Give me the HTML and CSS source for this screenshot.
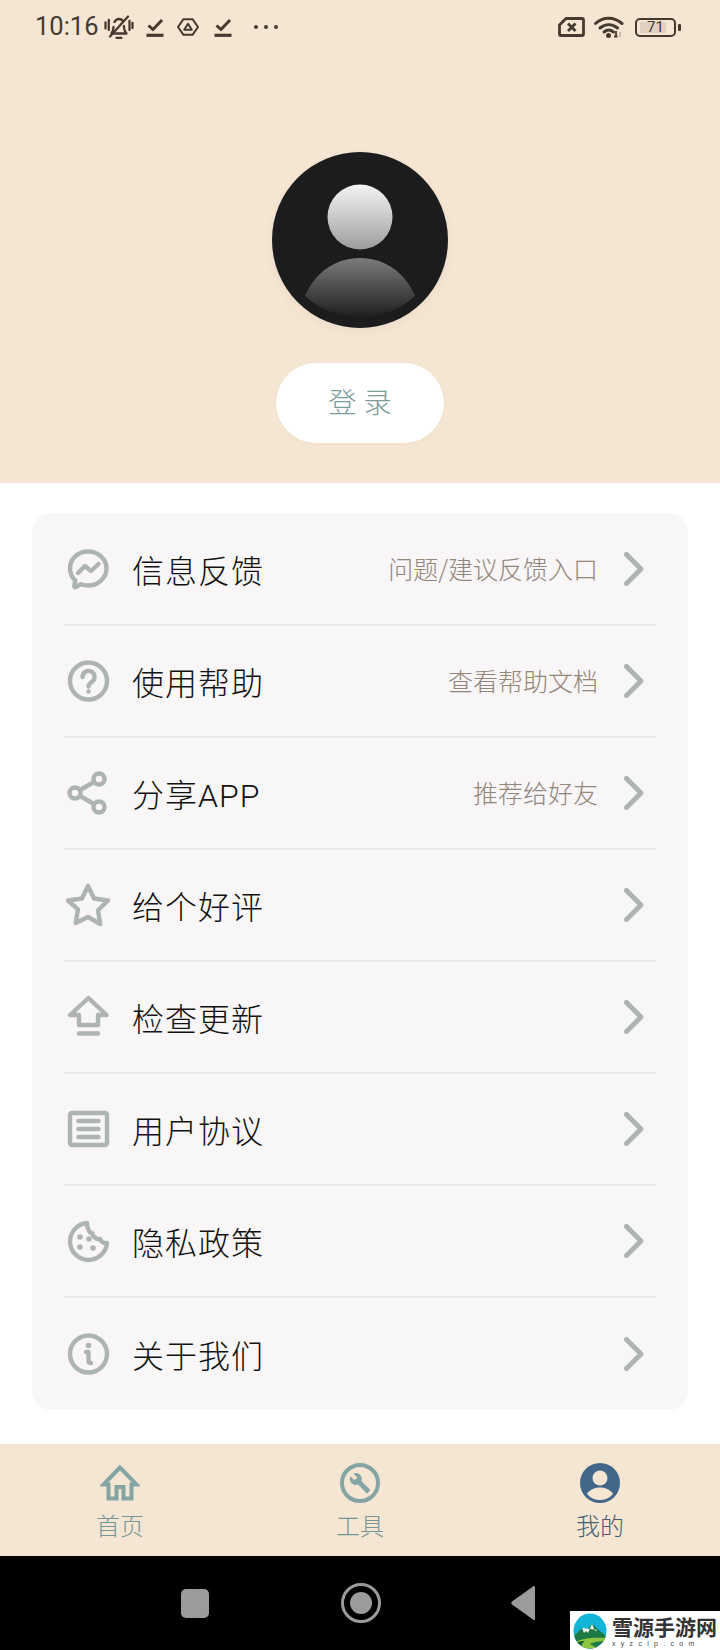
FILE: index.html
```html
<!DOCTYPE html>
<html lang="zh-CN">
<head>
<meta charset="utf-8">
<title>我的</title>
<link rel="stylesheet" href="styles.css">
</head>
<body>
<div class="page">
  <header class="header">
    <div class="status">
      <div class="status-left">
        <span class="time">10:16</span>
        <svg class="st-bell" viewBox="0 0 30 24"><g fill="none" stroke="currentColor" stroke-width="2.300" stroke-linecap="round" stroke-linejoin="round"><path d="M7.500 18.500h15c-1.500-1.500-2.500-3-2.500-6V11M9.500 12c0 3-1 5-2 6.500M10.500 7c1-1.800 2.800-3 4.500-3 1.700 0 3.300.8 4 2.300"/><path d="M6 21.500 24 1.500"/><path d="M1.500 7.500v6M4.800 5v10M25.500 6v9M28.500 8v5"/><path d="M12.500 22.800h5"/></g></svg>
        <svg class="st-check" viewBox="0 0 18 20"><g fill="none" stroke="currentColor"><path d="M2.500 8.500l4.500 4 9-9.500" stroke-width="3"/><path d="M.5 18.300h17" stroke-width="3.200"/></g></svg>
        <svg class="st-tri" viewBox="0 0 22 18"><g fill="none" stroke="currentColor" stroke-linejoin="round"><path d="M6.500 1.200h9L21 9l-5.500 7.800h-9L1 9z" stroke-width="2"/><path d="M11 5.800l3.800 6h-7.600z" stroke-width="2"/></g></svg>
        <svg class="st-check st-check-b" viewBox="0 0 18 20"><g fill="none" stroke="currentColor"><path d="M2.500 8.500l4.500 4 9-9.500" stroke-width="3"/><path d="M.5 18.300h17" stroke-width="3.200"/></g></svg>
        <svg class="st-dots" viewBox="0 0 24 4"><g fill="currentColor"><circle cx="2" cy="2" r="2"/><circle cx="12" cy="2" r="2"/><circle cx="22" cy="2" r="2"/></g></svg>
      </div>
      <div class="status-right">
        <svg class="st-sim" viewBox="0 0 27 20"><path d="M8 1.500h16a1.500 1.500 0 0 1 1.500 1.500v14a1.500 1.500 0 0 1-1.500 1.500H3A1.500 1.500 0 0 1 1.500 17V8z" fill="none" stroke="currentColor" stroke-width="2.800" stroke-linejoin="round"/><path d="M10 6.500l7.500 7.500M17.500 6.500 10 14" fill="none" stroke="currentColor" stroke-width="2.800"/></svg>
        <svg class="st-wifi" viewBox="0 0 30 22"><g fill="none" stroke="currentColor" stroke-width="3" stroke-linecap="round"><path d="M1.500 7.500C9 .5 20 .5 28 7.500"/><path d="M6 12c5.500-4.500 12-4.500 17.500 0"/><path d="M10 16c3-2.500 6.500-2.500 9.500 0"/></g><circle cx="14.500" cy="19.500" r="2.500" fill="currentColor"/><path d="M22 15v6M20 20.500h3.500" stroke="currentColor" stroke-width="1.800"/><path d="M26 16v5" stroke="#b9ad9f" stroke-width="1.500"/></svg>
        <div class="battery">
          <div class="battery-body"><span class="battery-level">71</span></div>
          <span class="battery-nub"></span>
        </div>
      </div>
    </div>
    <div class="avatar">
      <svg viewBox="0 0 176 176" width="176" height="176">
        <defs>
          <linearGradient id="headGrad" x1="0" y1="0" x2="0" y2="1"><stop offset="0" stop-color="#f4f4f4"/><stop offset="1" stop-color="#9d9d9d"/></linearGradient>
          <linearGradient id="bodyGrad" x1="0" y1="0" x2="0" y2="1"><stop offset="0" stop-color="#7b7b7b"/><stop offset="1" stop-color="#1f1f21"/></linearGradient>
        </defs>
        <circle cx="88" cy="88" r="88" fill="#1c1c1e"/>
        <circle cx="88" cy="65" r="32.500" fill="url(#headGrad)"/>
        <path d="M33 144C43 120 64 106 88 106s45 14 55 38c-14 13-34 21-55 21s-41-8-55-21z" fill="url(#bodyGrad)"/>
      </svg>
    </div>
    <button class="login">登 录</button>
  </header>

  <main class="main">
    <section class="card">
      <div class="row">
        <span class="row-icon"><svg viewBox="0 0 44 44"><path d="M22 4.500C12 4.500 4 12 4 21.500c0 4.800 2 9 5.300 12l-1 5.500c-.2 1 .6 1.500 1.400 1l5.300-2.800c2.200.8 4.500 1.300 7 1.300 10 0 18.500-7.500 18.500-17S32 4.500 22 4.500z"/><path d="M12 26l7-7 6 5 7.500-7"/></svg></span>
        <span class="row-title">信息反馈</span>
        <span class="row-sub">问题/建议反馈入口</span>
        <svg class="chev" viewBox="0 0 20 34"><path d="M2.500 2.500 17 17 2.500 31.500"/></svg>
      </div>
      <div class="row">
        <span class="row-icon"><svg viewBox="0 0 44 44"><circle cx="22.500" cy="22" r="18.500"/><path d="M16.500 18a6 6 0 1 1 9.500 4.800c-2 1.500-3.500 2.500-3.500 4.700"/><circle class="solid" cx="22.500" cy="32.500" r="2.200"/></svg></span>
        <span class="row-title">使用帮助</span>
        <span class="row-sub">查看帮助文档</span>
        <svg class="chev" viewBox="0 0 20 34"><path d="M2.500 2.500 17 17 2.500 31.500"/></svg>
      </div>
      <div class="row">
        <span class="row-icon"><svg viewBox="0 0 44 44"><circle cx="33" cy="8" r="5.500"/><circle cx="9" cy="22" r="5.500"/><circle cx="33" cy="36" r="5.500"/><path d="M14 19 28 11M14 25l14 8"/></svg></span>
        <span class="row-title">分享APP</span>
        <span class="row-sub">推荐给好友</span>
        <svg class="chev" viewBox="0 0 20 34"><path d="M2.500 2.500 17 17 2.500 31.500"/></svg>
      </div>
      <div class="row">
        <span class="row-icon"><svg viewBox="0 0 44 44"><path d="M22 3l6 12.500 14 2-10 9.800 2.300 13.700L22 34l-12.300 6L12 26.300 2 17.500l14-2z"/></svg></span>
        <span class="row-title">给个好评</span>
        <svg class="chev" viewBox="0 0 20 34"><path d="M2.500 2.500 17 17 2.500 31.500"/></svg>
      </div>
      <div class="row">
        <span class="row-icon"><svg viewBox="0 0 44 44"><path d="M22.500 3 4 20h9v10h19V20h8.500z"/><path class="thick" d="M13 38.500h19"/></svg></span>
        <span class="row-title">检查更新</span>
        <svg class="chev" viewBox="0 0 20 34"><path d="M2.500 2.500 17 17 2.500 31.500"/></svg>
      </div>
      <div class="row">
        <span class="row-icon"><svg viewBox="0 0 44 44"><rect x="4" y="6" width="37" height="32" rx="2"/><path class="thick" d="M12.500 14h20M12.500 22h20M12.500 30h20"/></svg></span>
        <span class="row-title">用户协议</span>
        <svg class="chev" viewBox="0 0 20 34"><path d="M2.500 2.500 17 17 2.500 31.500"/></svg>
      </div>
      <div class="row">
        <span class="row-icon"><svg viewBox="0 0 44 44"><path d="M21 4A18.500 18.500 0 1 0 41 24c-3 .5-6-1-7-4-3.500.5-7-1.500-7.500-5.500C23 14 21 8 21 4z"/><circle class="solid" cx="14" cy="18" r="2.800"/><circle class="solid" cx="23" cy="20" r="2.800"/><circle class="solid" cx="14" cy="28" r="2.800"/><circle class="solid" cx="27" cy="29" r="2.800"/></svg></span>
        <span class="row-title">隐私政策</span>
        <svg class="chev" viewBox="0 0 20 34"><path d="M2.500 2.500 17 17 2.500 31.500"/></svg>
      </div>
      <div class="row">
        <span class="row-icon"><svg viewBox="0 0 44 44"><circle cx="22.500" cy="22" r="18.500"/><circle class="solid" cx="22.500" cy="13.500" r="2.800"/><path d="M20 20h2.500v9c0 1.500 1 2 2.500 2"/></svg></span>
        <span class="row-title">关于我们</span>
        <svg class="chev" viewBox="0 0 20 34"><path d="M2.500 2.500 17 17 2.500 31.500"/></svg>
      </div>
    </section>
  </main>

  <nav class="tabbar">
    <div class="tab">
      <svg class="tab-icon" viewBox="0 0 40 40"><path d="M20 4.500 3.500 21.500H8.500V35.500h8V24h7V35.500h8V21.500h5z" fill="none" stroke="#84a5a3" stroke-width="4"/></svg>
      <span class="tab-label">首页</span>
    </div>
    <div class="tab">
      <svg class="tab-icon" viewBox="0 0 40 40"><circle cx="20" cy="20" r="18" fill="none" stroke="#84a5a3" stroke-width="4"/><path transform="translate(9 9) scale(.92)" fill="#84a5a3" d="M22.700 19l-9.100-9.100c.9-2.300.4-5-1.500-6.900-2-2-5-2.400-7.400-1.300L9 6 6 9 1.600 4.700C.4 7.100.9 10.100 2.900 12.100c1.900 1.900 4.600 2.400 6.900 1.500l9.100 9.100c.4.400 1 .4 1.400 0l2.300-2.300c.5-.4.5-1.100.1-1.400z"/></svg>
      <span class="tab-label">工具</span>
    </div>
    <div class="tab tab-active">
      <svg class="tab-icon" viewBox="0 0 40 40"><circle cx="20" cy="20" r="20" fill="#41688a"/><circle cx="20" cy="15" r="7.500" fill="#f5e6d3"/><path d="M7 31c3-5 8.500-6.500 13-6.500S30 26 33 31a17 17 0 0 1-26 0z" fill="#f5e6d3"/></svg>
      <span class="tab-label">我的</span>
    </div>
  </nav>

  <div class="navbar">
    <span class="nav-square"></span>
    <svg class="nav-circle" viewBox="0 0 40 40"><circle cx="20" cy="20" r="18.500" fill="none" stroke="#9b9b9b" stroke-width="3"/><circle cx="20" cy="20" r="11" fill="#9b9b9b"/></svg>
    <svg class="nav-back" viewBox="0 0 26 36"><path d="M25 2v32c0 1-1 1.500-2 .5L2 19.500c-1-1-1-2 0-3L23 1.500c1-1 2-.5 2 .5z" fill="#9b9b9b"/></svg>
  </div>

  <div class="watermark">
    <svg class="wm-logo" viewBox="0 0 34 36">
      <defs><clipPath id="wmClip"><ellipse cx="17" cy="18" rx="16.500" ry="17.500"/></clipPath></defs>
      <g clip-path="url(#wmClip)">
        <rect width="34" height="36" fill="#12b5d6"/>
        <path d="M0 24 9 15l4 3 6-7 15 13v12H0z" fill="#1d7a45"/>
        <path d="M9 15l2 5 2-2 2 2 4-9 3 7 3-1z" fill="#e9f3ea"/>
        <path d="M0 30c8-5 20-6 34-5v3c-8 0-14 1-17 3 3 2 6 3 9 5H0z" fill="#8cc63f"/>
        <path d="M0 36v-5c4-2 8-3 12-3-3 2-4 3-2 8z" fill="#0c5d34"/>
      </g>
    </svg>
    <div class="wm-text">
      <span class="wm-name">雪源手游网</span>
      <span class="wm-url">xyzclp.com</span>
    </div>
  </div>
</div>
</body>
</html>
```

FILE: styles.css
```css
* { box-sizing: border-box; }
html, body { margin: 0; padding: 0; background: #fff; }
body { width: 720px; height: 1650px; overflow: hidden; font-family: "Noto Sans CJK SC", "Noto Sans", sans-serif; }

.page { position: relative; width: 720px; height: 1650px; display: flex; flex-direction: column; }

.header { height: 483px; background: #f5e6d3; display: flex; flex-direction: column; align-items: center; flex: none; }

.status { width: 100%; height: 52px; display: flex; justify-content: space-between; align-items: center; padding: 2px 39px 0 35px; color: #453a30; }
.status-left, .status-right { display: flex; align-items: center; }
.time { font-family: Roboto, sans-serif; font-size: 25.500px; line-height: 1; color: #453a30; }
.st-bell { width: 30px; height: 24px; margin-left: 5px; }
.st-check { width: 18px; height: 20px; margin-left: 12px; }
.st-tri { width: 22px; height: 18px; margin-left: 13px; }
.st-check-b { margin-left: 15px; }
.st-dots { width: 24px; height: 4px; margin-left: 22px; }
.st-sim { width: 27px; height: 20px; }
.st-wifi { width: 30px; height: 22px; margin-left: 9px; }
.battery { display: flex; align-items: center; margin-left: 11px; }
.battery-body { width: 41px; height: 19px; border: 2px solid #453a30; border-radius: 5px; padding: 2px; }
.battery-level { display: block; width: 26px; height: 11px; margin-left: 1px; background: #dfd2c2; font-family: Roboto, sans-serif; font-size: 15px; line-height: 11px; text-align: center; color: #453a30; padding-left: 5px; }
.battery-nub { width: 3px; height: 7px; margin-left: 2px; background: #453a30; border-radius: 1px; }

.avatar { width: 176px; height: 176px; margin-top: 100px; border-radius: 50%; box-shadow: 0 3px 10px rgba(120, 90, 50, .08); }
.avatar svg { display: block; }

.login { width: 168px; height: 80px; margin-top: 35px; border: 0; border-radius: 40px; background: #fff; color: #7b9d9b; font-family: "Noto Sans CJK SC", sans-serif; font-size: 28.500px; font-weight: 300; line-height: 76px; padding: 0 0 4px; box-shadow: 0 1px 3px rgba(120, 90, 50, .04); }

.main { flex: 1; padding: 30px 32px 0; background: #fff; }
.card { background: #f8f6f7; border-radius: 20px; padding: 1px 32px 0; height: 897px; }

.row { height: 112px; display: flex; align-items: center; border-bottom: 2px solid #ebe9e9; }
.row:last-child { border-bottom: 0; }
.row-icon { width: 44px; height: 44px; margin-left: 2px; flex: none; }
.row-icon svg { display: block; width: 44px; height: 44px; fill: none; stroke: #aeb4b2; stroke-width: 4.400; stroke-linejoin: round; stroke-linecap: round; }
.row-icon .solid { fill: #aeb4b2; stroke: none; }
.row-icon .thick { stroke-width: 4.500; }
.row-title { margin-left: 22px; padding-top: 6px; font-family: Roboto, "Noto Sans CJK SC", sans-serif; font-size: 32px; font-weight: 300; letter-spacing: 1px; line-height: 44px; color: #111; }
.row-sub { margin-left: auto; padding-bottom: 3px; font-size: 25px; line-height: 36px; font-weight: 300; color: #92857a; }
.chev { width: 20px; height: 34px; margin-left: 26px; margin-right: 12px; flex: none; fill: none; stroke: #aeb4b2; stroke-width: 5; stroke-linecap: round; stroke-linejoin: round; }
.row-title + .chev { margin-left: auto; }

.tabbar { height: 112px; flex: none; background: #f5e6d3; display: flex; box-shadow: 0 -2px 2px rgba(0, 0, 0, .015); }
.tab { flex: 1; display: flex; flex-direction: column; align-items: center; padding-top: 19px; }
.tab-icon { display: block; width: 40px; height: 40px; flex: none; }
.tab-label { margin-top: 7px; font-size: 24px; font-weight: 300; line-height: 30px; color: #749694; }
.tab-active .tab-label { color: #465e72; }

.navbar { height: 94px; flex: none; background: #000; display: flex; align-items: center; padding-left: 181px; }
.nav-square { width: 28px; height: 29px; background: #9b9b9b; border-radius: 5px; flex: none; }
.nav-circle { width: 40px; height: 40px; margin-left: 132px; flex: none; }
.nav-back { width: 26px; height: 36px; margin-left: 129px; flex: none; }

.watermark { position: absolute; left: 570px; bottom: 0; width: 150px; height: 39px; background: #fff; display: flex; align-items: center; padding-left: 3px; }
.wm-logo { width: 34px; height: 36px; flex: none; }
.wm-text { display: flex; flex-direction: column; margin-left: 5px; }
.wm-name { font-size: 21px; line-height: 25px; font-weight: 700; color: #333; white-space: nowrap; }
.wm-url { font-family: "Liberation Sans", sans-serif; font-size: 7px; line-height: 9px; letter-spacing: 5.300px; color: #444; white-space: nowrap; }
```
